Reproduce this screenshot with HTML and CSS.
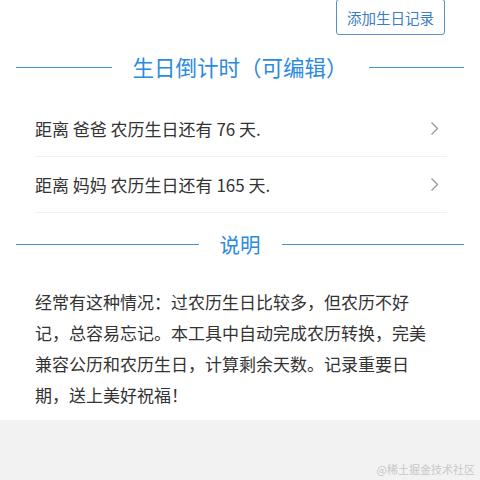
FILE: index.html
```html
<!DOCTYPE html>
<html lang="zh-CN">
<head>
    <meta charset="UTF-8">
    <meta name="viewport" content="width=device-width, initial-scale=1.0">
    <title>生日倒计时</title>
    <link rel="stylesheet" href="styles.css">
</head>
<body>

    <div class="toolbar">
        <button class="add-btn" id="addBtn">添加生日记录</button>
    </div>

    <div class="section-title">
        <span class="line"></span>
        <h2>生日倒计时（可编辑）</h2>
        <span class="line"></span>
    </div>

    <ul class="birthday-list" id="birthdayList">
        <li class="birthday-item">
            <span>距离 爸爸 农历生日还有 76 天.</span>
            <svg class="chevron" width="9" height="15" viewBox="0 0 9 15"><polyline points="1.5,1.5 7.5,7.5 1.5,13.5" fill="none" stroke="#999" stroke-width="1.3"/></svg>
        </li>
        <li class="birthday-item">
            <span>距离 妈妈 农历生日还有 165 天.</span>
            <svg class="chevron" width="9" height="15" viewBox="0 0 9 15"><polyline points="1.5,1.5 7.5,7.5 1.5,13.5" fill="none" stroke="#999" stroke-width="1.3"/></svg>
        </li>
    </ul>

    <div class="section-title section-title--small">
        <span class="line"></span>
        <h2>说明</h2>
        <span class="line"></span>
    </div>

    <p class="intro">经常有这种情况：过农历生日比较多，但农历不好记，总容易忘记。本工具中自动完成农历转换，完美兼容公历和农历生日，计算剩余天数。记录重要日期，送上美好祝福！</p>

    <div class="footer">
        <span class="watermark">@稀土掘金技术社区</span>
    </div>

</body>
</html>
```

FILE: styles.css
```css
html, body { height: 100%; }
body { font-family: "Noto Sans CJK SC", "Noto Sans", sans-serif; background: #fff; color: #333; margin: 0; display: flex; flex-direction: column; overflow: hidden; }
.toolbar { display: flex; justify-content: flex-end; padding: 0 35px; margin-top: -1px; }
.add-btn { height: 36px; padding: 0 10px; font-family: inherit; font-size: 14.5px; color: #3b7cc6; background: #fff; border: 1px solid #5a8fcb; border-radius: 3px; }
.section-title { display: flex; align-items: center; gap: 21px; padding: 0 16px; margin-top: 17px; }
.section-title h2 { margin: 0; font-size: 21.5px; font-weight: 400; line-height: 30px; color: #2b8ae0; }
.section-title .line { flex: 1; height: 1px; background: #4a90d6; }
.section-title--small { margin-top: 16px; }
.section-title--small h2 { font-size: 20.5px; }
.birthday-list { list-style: none; margin: 19px 0 0; padding: 0 33px 0 35px; }
.birthday-item { display: flex; justify-content: space-between; align-items: center; height: 55px; border-bottom: 1px solid #f0f0f0; font-size: 17px; }
.chevron { margin-right: 8px; }
.intro { margin: 27px 0 0; padding: 0 40px 10px 35px; font-size: 17px; line-height: 31px; }
.footer { flex: 1; background: #f2f2f2; display: flex; align-items: flex-end; justify-content: flex-end; padding: 0 5px 3px; }
.watermark { font-size: 11px; color: #c8c8c8; }
```
